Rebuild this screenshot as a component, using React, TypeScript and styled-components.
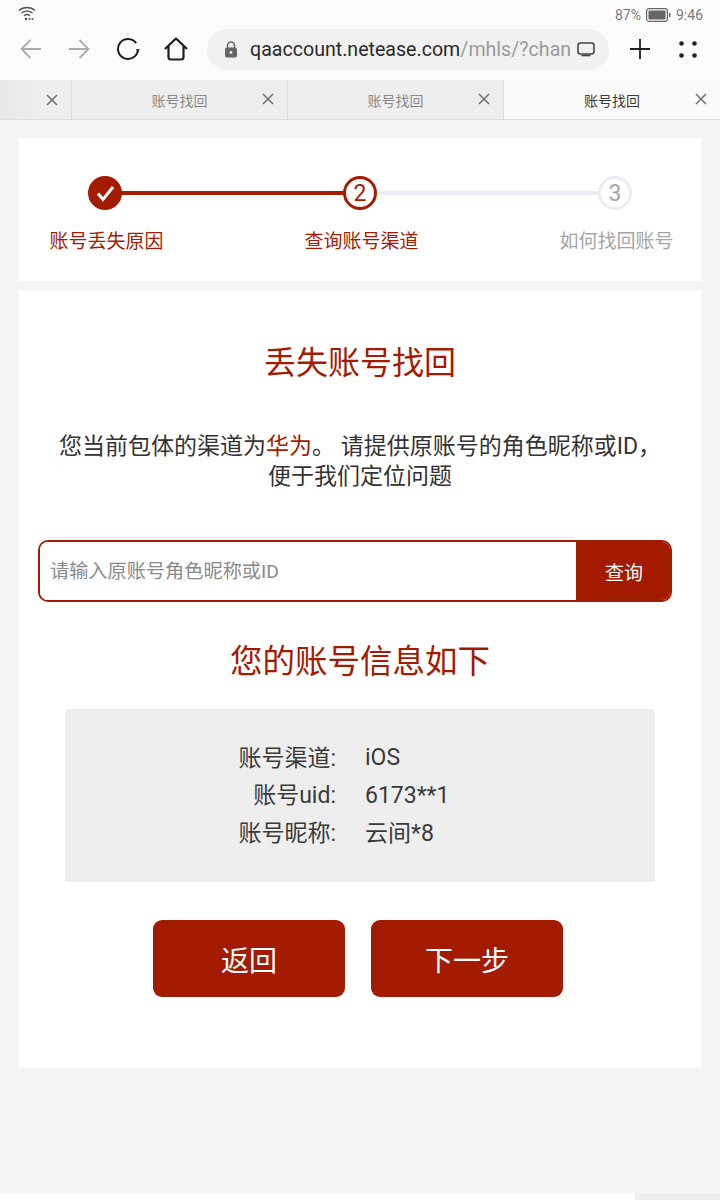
import React from 'react';
import styled, { createGlobalStyle } from 'styled-components';

const RED = '#a31b00';

const GlobalStyle = createGlobalStyle`
    html, body {
        margin: 0;
        padding: 0;
        background: #f5f5f5;
    }
    * {
        box-sizing: border-box;
    }
    body {
        font-family: Roboto, "Noto Sans CJK SC", sans-serif;
    }
`;

const Page = styled.div`
    width: 720px;
    height: 1200px;
    display: flex;
    flex-direction: column;
    overflow: hidden;
    background: #f5f5f5;
`;

const BrowserChrome = styled.div`
    height: 80px;
    background: #fbfbfb;
    flex-shrink: 0;
`;

const StatusBar = styled.div`
    height: 28px;
    padding: 3px 17px 0 18px;
    display: flex;
    align-items: flex-start;
    justify-content: space-between;
`;

const WifiIcon = styled.svg`
    margin-top: 3px;
`;

const StatusRight = styled.div`
    display: flex;
    align-items: center;
    gap: 5px;
    height: 24px;
    font-size: 14px;
    color: #7c7c7c;
`;

const Toolbar = styled.div`
    height: 42px;
    padding-left: 20px;
    display: flex;
    align-items: center;
`;

const ToolButton = styled.div<{ $w: number }>`
    width: ${(props) => props.$w}px;
    height: 42px;
    flex-shrink: 0;
    display: flex;
    align-items: center;
`;

const AddressBar = styled.div`
    width: 402px;
    height: 41px;
    margin-left: 19px;
    padding-left: 17px;
    border-radius: 21px;
    background: #f1f1f1;
    display: flex;
    align-items: center;
    flex-shrink: 0;
`;

const LockIcon = styled.svg`
    flex-shrink: 0;
`;

const Url = styled.div`
    width: 314px;
    margin: 0 13px 0 12px;
    font-size: 19.600px;
    white-space: nowrap;
    color: #2a2a2a;
    span {
        color: #9a9a9a;
    }
`;

const ToolRight = styled.div`
    margin-left: 21px;
    display: flex;
    align-items: center;
    gap: 29px;
`;

const TabBar = styled.div`
    height: 40px;
    flex-shrink: 0;
    display: flex;
    background: #eeeeee;
    border-bottom: 1px solid #dedede;
`;

const Tab = styled.div<{ $w: number; $active?: boolean; $first?: boolean }>`
    width: ${(props) => props.$w}px;
    flex-shrink: 0;
    display: flex;
    align-items: center;
    justify-content: ${(props) => (props.$first ? 'flex-end' : 'center')};
    position: relative;
    padding-right: ${(props) => (props.$first ? '13px' : '0')};
    font-size: 14px;
    color: ${(props) => (props.$active ? '#3a3a3a' : '#8a8a8a')};
    background: ${(props) => {
        if (props.$active) return '#fafafa';
        if (props.$first) return 'linear-gradient(90deg, #e8e8e8, #eeeeee 55%)';
        return '#eeeeee';
    }};
    border-right: ${(props) => (props.$active ? 'none' : '1px solid #dcdcdc')};
`;

const TabClose = styled.svg<{ $first?: boolean }>`
    width: 12px;
    height: 12px;
    position: ${(props) => (props.$first ? 'static' : 'absolute')};
    right: 13px;
    top: 13px;
`;

const Content = styled.div`
    flex: 1;
    padding: 18px 19px 0;
    display: flex;
    flex-direction: column;
    gap: 10px;
`;

const StepCard = styled.div`
    height: 143px;
    background: #fff;
    padding: 38px 0 0 11px;
    display: grid;
    grid-template-columns: repeat(3, 150px);
    column-gap: 105px;
`;

const Step = styled.div`
    position: relative;
    display: flex;
    flex-direction: column;
    align-items: center;
`;

const StepLine = styled.div<{ $done: boolean }>`
    position: absolute;
    top: 15px;
    left: 50%;
    width: 255px;
    height: 4px;
    background: ${(props) => (props.$done ? RED : '#ecedf3')};
`;

const StepCircle = styled.div<{ $state: 'done' | 'active' | 'todo' }>`
    position: relative;
    z-index: 1;
    width: 34px;
    height: 34px;
    border-radius: 50%;
    display: flex;
    align-items: center;
    justify-content: center;
    font-size: 23px;
    background: ${(props) => (props.$state === 'done' ? RED : '#fff')};
    color: ${(props) => (props.$state === 'todo' ? '#a5a5a5' : RED)};
    border: 3px solid ${(props) => (props.$state === 'todo' ? '#ecedf3' : RED)};
`;

const StepLabel = styled.div<{ $on: boolean }>`
    margin: 19px 0 0 3px;
    font-size: 19px;
    line-height: 26px;
    white-space: nowrap;
    color: ${(props) => (props.$on ? RED : '#a5a5a5')};
`;

const MainCard = styled.div`
    height: 777px;
    background: #fff;
    display: flex;
    flex-direction: column;
    align-items: center;
`;

const PageTitle = styled.h1`
    margin: 50px 0 0;
    font-size: 32px;
    font-weight: 400;
    line-height: 44px;
    color: ${RED};
`;

const SectionTitle = styled.h2`
    margin: 38px 0 0;
    font-size: 32.500px;
    font-weight: 400;
    line-height: 44px;
    color: ${RED};
`;

const Desc = styled.p`
    margin: 47px 0 0;
    width: 640px;
    text-align: center;
    font-size: 23px;
    line-height: 30px;
    color: #333;
    em {
        font-style: normal;
        color: ${RED};
    }
`;

const SearchBox = styled.div`
    margin: 48px 0 0 19px;
    width: 634px;
    height: 62px;
    align-self: flex-start;
    display: flex;
    border: 2px solid ${RED};
    border-radius: 10px;
    overflow: hidden;
`;

const SearchInput = styled.input`
    flex: 1;
    min-width: 0;
    border: none;
    outline: none;
    padding: 0 10px;
    font-family: inherit;
    font-size: 19.200px;
    color: #333;
    &::placeholder {
        color: #8a8a8a;
        opacity: 1;
    }
`;

const SearchButton = styled.div`
    width: 94px;
    padding-left: 2px;
    display: flex;
    align-items: center;
    justify-content: center;
    background: ${RED};
    color: #fff;
    font-size: 19px;
`;

const InfoBox = styled.div`
    margin-top: 25px;
    width: 590px;
    height: 173px;
    padding-top: 28px;
    background: #eeeeee;
    display: grid;
    grid-template-columns: 271px 1fr;
    column-gap: 29px;
    grid-auto-rows: 37.500px;
    align-items: center;
    font-size: 23px;
    color: #3a3a3a;
`;

const InfoLabel = styled.div`
    text-align: right;
`;

const InfoValue = styled.div<{ $latin?: boolean }>`
    padding-top: ${(props) => (props.$latin ? '4px' : '0')};
`;

const Actions = styled.div`
    margin: 38px 4px 0 0;
    display: flex;
    gap: 26px;
`;

const ActionButton = styled.div`
    width: 192px;
    height: 77px;
    border-radius: 9px;
    background: ${RED};
    color: #fff;
    font-size: 28px;
    display: flex;
    align-items: center;
    justify-content: center;
`;

const BottomBar = styled.div`
    height: 7px;
    flex-shrink: 0;
    display: flex;
`;

const BottomLeft = styled.div`
    width: 635px;
    background: #fff;
`;

const BottomRight = styled.div`
    flex: 1;
    background: #eeeeee;
`;

function CloseIcon({ first }: { first?: boolean }) {
    return (
        <TabClose $first={first} viewBox="0 0 12 12" fill="none" stroke="#6e6e6e" strokeWidth="1.5">
            <path d="M1 1l10 10M11 1L1 11" />
        </TabClose>
    );
}

const steps = [
    { label: '账号丢失原因', state: 'done' as const },
    { label: '查询账号渠道', state: 'active' as const },
    { label: '如何找回账号', state: 'todo' as const },
];

const tabs = [
    { w: 216, title: '账号找回' },
    { w: 216, title: '账号找回' },
    { w: 216, title: '账号找回', active: true },
];

const info = [
    { label: '账号渠道:', value: 'iOS', latin: true },
    { label: '账号uid:', value: '6173**1', latin: true },
    { label: '账号昵称:', value: '云间*8', latin: false },
];

function App() {
    return (
        <Page>
            <GlobalStyle />
            <BrowserChrome>
                <StatusBar>
                    <WifiIcon width="18" height="16" viewBox="0 0 18 16" fill="none" stroke="#555" strokeWidth="1.3">
                        <path d="M1 4.500c4.400-4 11.600-4 16 0M3.500 7.100c3-2.700 8-2.700 11 0M6 9.700c1.700-1.400 4.300-1.400 6 0" />
                        <circle cx="8" cy="13" r="1.300" fill="#555" stroke="none" />
                        <circle cx="11.500" cy="13" r="1" fill="#555" stroke="none" />
                        <circle cx="14.500" cy="13" r="1" fill="#555" stroke="none" />
                    </WifiIcon>
                    <StatusRight>
                        87%
                        <svg width="25" height="14" viewBox="0 0 25 14">
                            <rect x="0.600" y="0.600" width="20.800" height="12.800" rx="2.500" fill="none" stroke="#666" strokeWidth="1.200" />
                            <rect x="2.500" y="2.500" width="17" height="9" rx="1" fill="#666" />
                            <rect x="23" y="5" width="1.500" height="4" fill="#666" />
                        </svg>
                        <span>9:46</span>
                    </StatusRight>
                </StatusBar>
                <Toolbar>
                    <ToolButton $w={48}>
                        <svg width="22" height="22" viewBox="0 0 22 22" fill="none" stroke="#ababab" strokeWidth="1.800">
                            <path d="M21 11H1.500M10.500 2l-9 9 9 9" />
                        </svg>
                    </ToolButton>
                    <ToolButton $w={48}>
                        <svg width="22" height="22" viewBox="0 0 22 22" fill="none" stroke="#ababab" strokeWidth="1.800">
                            <path d="M1 11h19.500M11.500 2l9 9-9 9" />
                        </svg>
                    </ToolButton>
                    <ToolButton $w={48}>
                        <svg width="24" height="24" viewBox="0 0 24 24" fill="none" stroke="#1f1f1f" strokeWidth="2">
                            <path d="M21.900 13.400A10 10 0 1 1 20.200 6.300" />
                            <path d="M19.800 12.200h4l-2 3.200z" fill="#1f1f1f" stroke="none" />
                        </svg>
                    </ToolButton>
                    <ToolButton $w={24}>
                        <svg width="24" height="24" viewBox="0 0 24 24" fill="none" stroke="#1f1f1f" strokeWidth="2.200" strokeLinejoin="round">
                            <path d="M1 12L12 1.500 23 12M4.500 9v11a2.500 2.500 0 0 0 2.500 2.500h10a2.500 2.500 0 0 0 2.500-2.500V9" />
                        </svg>
                    </ToolButton>
                    <AddressBar>
                        <LockIcon width="14" height="17" viewBox="0 0 14 17">
                            <path d="M3.500 7V4.500a3.500 3.500 0 0 1 7 0V7" fill="none" stroke="#666" strokeWidth="1.600" />
                            <rect x="1" y="6.500" width="12" height="10" rx="2" fill="#666" />
                            <circle cx="7" cy="11.500" r="1.400" fill="#f1f1f1" />
                        </LockIcon>
                        <Url>
                            qaaccount.netease.com<span>/mhls/?chan</span>
                        </Url>
                        <svg width="18" height="15" viewBox="0 0 18 15" fill="none" stroke="#444" strokeWidth="1.600">
                            <rect x="1" y="1" width="16" height="11" rx="2.500" />
                            <path d="M4.500 13.500h9" />
                        </svg>
                    </AddressBar>
                    <ToolRight>
                        <svg width="20" height="20" viewBox="0 0 20 20" stroke="#1f1f1f" strokeWidth="1.800">
                            <path d="M0 10h20M10 0v20" />
                        </svg>
                        <svg width="18" height="17" viewBox="0 0 18 17" fill="#1f1f1f">
                            <circle cx="2.500" cy="2.500" r="2.300" />
                            <circle cx="15.500" cy="2.500" r="2.300" />
                            <circle cx="2.500" cy="14.500" r="2.300" />
                            <circle cx="15.500" cy="14.500" r="2.300" />
                        </svg>
                    </ToolRight>
                </Toolbar>
            </BrowserChrome>
            <TabBar>
                <Tab $w={72} $first>
                    <CloseIcon first />
                </Tab>
                {tabs.map((t, i) => (
                    <Tab key={i} $w={t.w} $active={t.active}>
                        {t.title}
                        <CloseIcon />
                    </Tab>
                ))}
            </TabBar>
            <Content>
                <StepCard>
                    {steps.map((s, i) => (
                        <Step key={s.label}>
                            {i < 2 && <StepLine $done={i === 0} />}
                            <StepCircle $state={s.state}>
                                {s.state === 'done' ? (
                                    <svg width="19" height="17" viewBox="0 0 19 17" fill="none" stroke="#fff" strokeWidth="3">
                                        <path d="M2 8.500l5 6L17 2" />
                                    </svg>
                                ) : i + 1}
                            </StepCircle>
                            <StepLabel $on={s.state !== 'todo'}>{s.label}</StepLabel>
                        </Step>
                    ))}
                </StepCard>
                <MainCard>
                    <PageTitle>丢失账号找回</PageTitle>
                    <Desc>
                        您当前包体的渠道为<em>华为</em>。 请提供原账号的角色昵称或ID，
                        <br />
                        便于我们定位问题
                    </Desc>
                    <SearchBox>
                        <SearchInput placeholder="请输入原账号角色昵称或ID" />
                        <SearchButton>查询</SearchButton>
                    </SearchBox>
                    <SectionTitle>您的账号信息如下</SectionTitle>
                    <InfoBox>
                        {info.map((row) => (
                            <React.Fragment key={row.label}>
                                <InfoLabel>{row.label}</InfoLabel>
                                <InfoValue $latin={row.latin}>{row.value}</InfoValue>
                            </React.Fragment>
                        ))}
                    </InfoBox>
                    <Actions>
                        <ActionButton>返回</ActionButton>
                        <ActionButton>下一步</ActionButton>
                    </Actions>
                </MainCard>
            </Content>
            <BottomBar>
                <BottomLeft />
                <BottomRight />
            </BottomBar>
        </Page>
    );
}

export default App;
